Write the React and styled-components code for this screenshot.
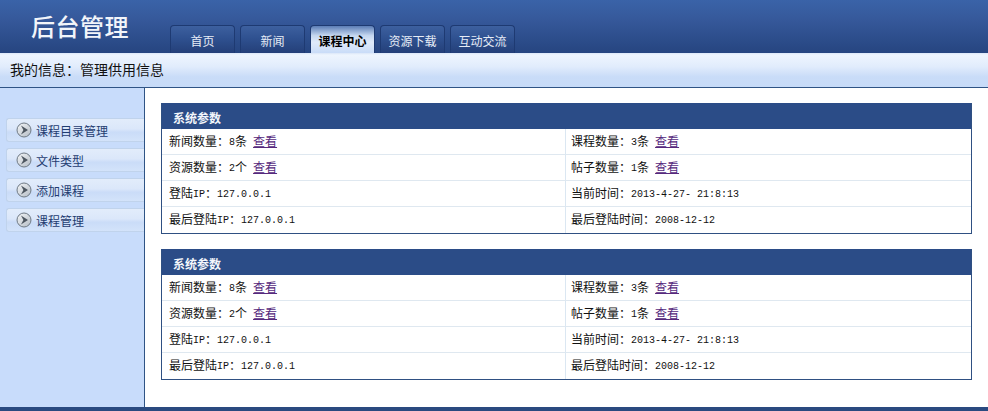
import React from "react";
import styled, { createGlobalStyle } from "styled-components";

const Global = createGlobalStyle`
  html, body { margin: 0; padding: 0; background: #fff; }
  body { font-family: "Noto Sans CJK SC", "Liberation Sans", sans-serif; font-size: 12px; color: #111; }
  * { box-sizing: border-box; }
`;

const Page = styled.div`
  width: 988px; height: 411px; display: flex; flex-direction: column; overflow: hidden;
`;
const Header = styled.header`
  height: 53px; flex: none; display: flex; align-items: flex-end; padding-left: 170px; position: relative;
  background: linear-gradient(#3a63a8 0%, #36599b 35%, #264580 100%);
`;
const Title = styled.h1`
  position: absolute; left: 31px; top: 9px; margin: 0; font-size: 24px; line-height: 34px; font-weight: 500;
  letter-spacing: 0.5px; color: #f2f5fa;
`;
const Tabs = styled.nav`display: flex; gap: 5px;`;
const Tab = styled.a`
  width: 65px; height: 28px; display: flex; align-items: center; justify-content: center; padding-top: 2px;
  border: 1px solid #1e3a72; border-bottom: 0; border-radius: 4px 4px 0 0; font-size: 12px; line-height: 16px;
  color: ${p => (p.$active ? "#000" : "#e6ecf6")};
  font-weight: ${p => (p.$active ? 700 : 400)};
  background: ${p => p.$active
    ? "linear-gradient(#5b7db6 0%, #c4d6ef 35%, #dfeafa 60%, #c9dcf8 100%)"
    : "linear-gradient(#3d609f 0%, #2f5190 45%, #243f78 100%)"};
`;
const InfoBar = styled.div`
  height: 35px; flex: none; display: flex; align-items: center; padding: 0 0 2px 10px; font-size: 14px; color: #111;
  border-bottom: 1px solid #2f5485;
  background: linear-gradient(#dbe7f8 0, #eef5fe 6%, #e1ecfc 40%, #c9dcf8 70%, #c7dbf8 100%);
`;
const Body = styled.div`flex: 1; display: flex; min-height: 0;`;
const Sidebar = styled.aside`
  width: 145px; flex: none; padding: 30px 0 0 6px; display: flex; flex-direction: column; gap: 6px;
  background: #c8dcfb; border-right: 1px solid #2f5485;
`;
const MenuItem = styled.a`
  height: 24px; display: flex; align-items: center; gap: 4px; padding-left: 9px; font-size: 12px; color: #1f3c70;
  border: 1px solid #c0d3ec; border-right: 0; border-radius: 3px 0 0 3px;
  background: linear-gradient(#e2ecfb 0%, #dbe7fa 45%, #cadcf8 60%, #d3e3fa 100%);
`;
const Main = styled.main`
  flex: 1; padding: 15px 16px 0 16px; display: flex; flex-direction: column; gap: 15px;
`;
const Panel = styled.section`border: 1px solid #2f5082; border-top: 0;`;
const PanelTitle = styled.h2`
  margin: 0; height: 26px; padding: 6px 0 0 11px; background: #2b4c87; color: #f3f6fb;
  font-size: 12px; line-height: 18px; font-weight: 700;
`;
const Grid = styled.div`display: grid; grid-template-columns: 403px 1fr;`;
const Cell = styled.div`
  height: 26px; padding-left: ${p => (p.$right ? 5 : 7)}px; padding-top: 3px;
  font-size: 12px; line-height: 18px; white-space: pre;
  border-left: ${p => (p.$right ? "1px solid #dbe7f2" : "0")};
  border-bottom: ${p => (p.$last ? "0" : "1px solid #dfe8f0")};
`;
const Mono = styled.span`font-family: "Liberation Mono", monospace; font-size: 10px; vertical-align: 1px;`;
const ViewLink = styled.a`color: #56297d; text-decoration: underline; margin-left: 6px;`;
const Footer = styled.footer`height: 4px; flex: none; background: #2a4a80;`;

const Arrow = () => (
  <svg width="16" height="16" viewBox="0 0 16 16" aria-hidden="true">
    <defs>
      <linearGradient id="ag" x1="0" y1="0" x2="1" y2="1">
        <stop offset="0" stopColor="#f4f6f8" />
        <stop offset="1" stopColor="#b4bcc5" />
      </linearGradient>
    </defs>
    <circle cx="8" cy="8" r="7" fill="url(#ag)" stroke="#6f7a85" strokeWidth="1" />
    <path d="M5 3.6 L12 8 L5 12.4 L7.4 8 Z" fill="#4e5761" />
  </svg>
);

const rows = [
  [["新闻数量：", "8", "条", true], ["课程数量：", "3", "条", true]],
  [["资源数量：", "2", "个", true], ["帖子数量：", "1", "条", true]],
  [["登陆", "IP", "：", false, "127.0.0.1"], ["当前时间：", "2013-4-27- 21:8:13", "", false]],
  [["最后登陆", "IP", "：", false, "127.0.0.1"], ["最后登陆时间：", "2008-12-12", "", false]],
];

const CellBody = ({ c }) => (
  <>
    {c[0]}<Mono>{c[1]}</Mono>{c[2]}
    {c[4] ? <Mono>{c[4]}</Mono> : null}
    {c[3] ? <ViewLink>查看</ViewLink> : null}
  </>
);

const InfoPanel = () => (
  <Panel>
    <PanelTitle>系统参数</PanelTitle>
    <Grid>
      {rows.map((r, i) => (
        <React.Fragment key={i}>
          <Cell $last={i === 3}><CellBody c={r[0]} /></Cell>
          <Cell $right $last={i === 3}><CellBody c={r[1]} /></Cell>
        </React.Fragment>
      ))}
    </Grid>
  </Panel>
);

export default function App() {
  return (
    <Page>
      <Global />
      <Header>
        <Title>后台管理</Title>
        <Tabs>
          {["首页", "新闻", "课程中心", "资源下载", "互动交流"].map((t, i) => (
            <Tab key={t} $active={i === 2}>{t}</Tab>
          ))}
        </Tabs>
      </Header>
      <InfoBar>我的信息：管理供用信息</InfoBar>
      <Body>
        <Sidebar>
          {["课程目录管理", "文件类型", "添加课程", "课程管理"].map(t => (
            <MenuItem key={t}><Arrow />{t}</MenuItem>
          ))}
        </Sidebar>
        <Main>
          <InfoPanel />
          <InfoPanel />
        </Main>
      </Body>
      <Footer />
    </Page>
  );
}
